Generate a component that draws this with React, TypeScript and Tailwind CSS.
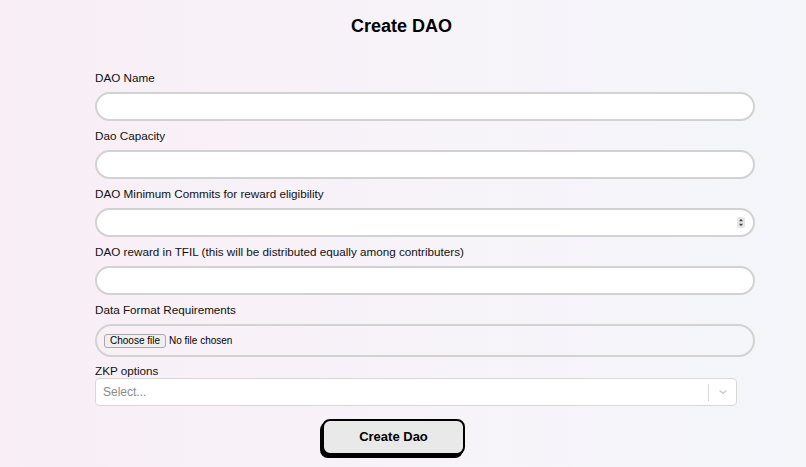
import React from "react";

const font = { fontFamily: '"Liberation Sans", Arial, Helvetica, sans-serif' };

function Field({ label, children }: { label: string; children: React.ReactNode }) {
  return (
    <div className="mb-[7px]">
      <label className="block text-[11.7px] leading-[16px] text-[#111] mb-[6px] mt-[1px]">{label}</label>
      {children}
    </div>
  );
}

const inputCls =
  "block w-full h-[29px] rounded-full border-2 border-[#d2d2d2] bg-white px-3 text-[12px] outline-none";

export default function App() {
  return (
    <div
      style={font}
      className="min-h-[467px] w-full bg-gradient-to-r from-[#f9eef6] via-[#f7f3f9] to-[#f4f6fa] text-black"
    >
      <div className="pt-[15px]">
        <h1 className="text-center text-[18px] leading-[22px] font-bold ml-[-3px]">Create DAO</h1>
      </div>
      <form className="mx-[95px] mt-[33px] w-[660px]" onSubmit={(e) => e.preventDefault()}>
        <Field label="DAO Name">
          <input className={inputCls} type="text" />
        </Field>
        <Field label="Dao Capacity">
          <input className={inputCls} type="text" />
        </Field>
        <Field label="DAO Minimum Commits for reward eligibility">
          <div className="relative">
            <input className={inputCls} type="text" />
            <svg
              className="absolute right-[10px] top-[9px]"
              width="8"
              height="11"
              viewBox="0 0 8 11"
            >
              <rect x="0" y="0" width="8" height="11" rx="1.5" fill="#e6e6e6" />
              <path d="M2 4.2 L4 1.8 L6 4.2 Z" fill="#444" />
              <path d="M2 6.8 L4 9.2 L6 6.8 Z" fill="#444" />
            </svg>
          </div>
        </Field>
        <Field label="DAO reward in TFIL (this will be distributed equally among contributers)">
          <input className={inputCls} type="text" />
        </Field>
        <Field label="Data Format Requirements">
          <div className="flex h-[33px] w-full items-center rounded-full border-2 border-[#d2d2d2] pl-[7px]">
            <span className="rounded-[3px] border border-[#a9a9a9] bg-[#efefef] px-[5px] text-[10px] leading-[12px] text-black">
              Choose file
            </span>
            <span className="ml-[3px] text-[10px] text-black">No file chosen</span>
          </div>
        </Field>
        <div>
          <label className="block text-[11.7px] leading-[14px] text-[#111]">ZKP options</label>
          <div className="flex h-[28px] w-[642px] items-center rounded-[4px] border border-[#d8d8d8] bg-white">
            <span className="flex-1 pl-[7px] text-[12px] text-[#8a8a8a]">Select...</span>
            <span className="h-[17px] w-px bg-[#d6d6d6]" />
            <span className="flex w-[27px] items-center justify-center">
              <svg width="12" height="12" viewBox="0 0 20 20">
                <path
                  d="M4.5 7.5 L10 12.5 L15.5 7.5"
                  fill="none"
                  stroke="#c4c4c4"
                  strokeWidth="1.8"
                />
              </svg>
            </span>
          </div>
        </div>
        <div className="mt-[13px] ml-[227px]">
          <button
            type="submit"
            className="h-[36px] w-[143px] rounded-[8px] border-2 border-black bg-[#e9e9e9] text-[13px] font-bold shadow-[-2px_3px_0_#000]"
          >
            Create Dao
          </button>
        </div>
      </form>
    </div>
  );
}
